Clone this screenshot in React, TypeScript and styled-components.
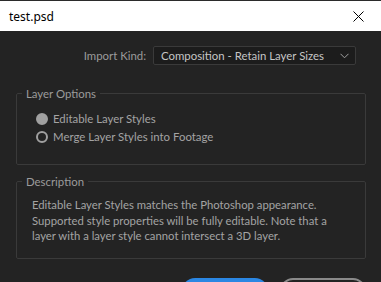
import styled, { createGlobalStyle } from 'styled-components'

const Global = createGlobalStyle`
  html, body {
    margin: 0;
    padding: 0;
    background: #232323;
  }
  body {
    font-family: Lato, "Noto Sans", sans-serif;
    overflow: hidden;
  }
`

const Window = styled.div`
  width: 381px;
  height: 282px;
  display: flex;
  flex-direction: column;
  background: #232323;
  overflow: hidden;
`

const TitleBar = styled.div`
  height: 31px;
  flex: none;
  background: #ffffff;
  border-top: 1px solid #2b2b2b;
  box-sizing: border-box;
  display: flex;
  align-items: center;
  justify-content: space-between;
  padding: 0 0 0 9px;
`

const Title = styled.span`
  font-family: "Noto Sans", sans-serif;
  font-size: 12px;
  color: #000;
`

const CloseBtn = styled.div`
  width: 46px;
  height: 30px;
  display: flex;
  align-items: center;
  justify-content: center;
`

const Body = styled.div`
  flex: 1;
  display: flex;
  flex-direction: column;
  padding: 15px 15px 0 16px;
`

const KindRow = styled.div`
  display: flex;
  align-items: center;
  justify-content: flex-end;
  gap: 7px;
  padding-right: 10px;
`

const Label = styled.span`
  font-size: 11.4px;
  color: #9b9b9b;
`

const Select = styled.div`
  width: 203px;
  height: 19px;
  box-sizing: border-box;
  border: 1px solid #3a3a3a;
  border-radius: 2px;
  background: #1c1c1c;
  display: flex;
  align-items: center;
  justify-content: space-between;
  padding: 0 6px 0 7px;
  font-size: 11.4px;
  color: #c6c6c6;
`

const Group = styled.fieldset<{ $h: number; $mt: number }>`
  margin: ${p => p.$mt}px 0 0 0;
  height: ${p => p.$h}px;
  box-sizing: border-box;
  border: 1px solid #3a3a3a;
  border-radius: 2px;
  padding: 0;
  min-width: 0;
`

const Legend = styled.legend`
  font-size: 11.4px;
  color: #9b9b9b;
  padding: 0 4px;
  margin-left: 5px;
`

const Options = styled.div`
  display: flex;
  flex-direction: column;
  gap: 3px;
  padding: 11px 0 0 19px;
`

const Option = styled.label`
  display: flex;
  align-items: center;
  gap: 5px;
  font-size: 11.4px;
  color: #a3a3a3;
  height: 15px;
`

const Dot = styled.span<{ $on?: boolean }>`
  width: 12px;
  height: 12px;
  border-radius: 50%;
  box-sizing: border-box;
  border: 2px solid #a0a0a0;
  background: ${p => (p.$on ? '#a0a0a0' : 'transparent')};
  flex: none;
`

const Desc = styled.div`
  display: flex;
  flex-direction: column;
  padding: 9px 0 0 15px;
  font-size: 11.3px;
  line-height: 15.5px;
  color: #a3a3a3;
  white-space: nowrap;
`

const Buttons = styled.div`
  display: flex;
  justify-content: flex-end;
  gap: 12px;
  margin-top: 19px;
`

const Button = styled.div<{ $primary?: boolean }>`
  width: 86px;
  height: 26px;
  box-sizing: border-box;
  border-radius: 13px;
  background: ${p => (p.$primary ? '#2b87e3' : 'transparent')};
  border: ${p => (p.$primary ? 'none' : '2px solid #8a8a8a')};
`

export default function App() {
  return (
    <Window>
      <Global />
      <TitleBar>
        <Title>test.psd</Title>
        <CloseBtn>
          <svg width="11" height="11" viewBox="0 0 11 11">
            <path d="M0.5 0.5 L10.5 10.5 M10.5 0.5 L0.5 10.5" stroke="#000" strokeWidth="1" />
          </svg>
        </CloseBtn>
      </TitleBar>
      <Body>
        <KindRow>
          <Label>Import Kind:</Label>
          <Select>
            <span>Composition - Retain Layer Sizes</span>
            <svg width="9" height="6" viewBox="0 0 9 6">
              <path d="M0.5 0.8 L4.5 4.8 L8.5 0.8" stroke="#a0a0a0" strokeWidth="1" fill="none" />
            </svg>
          </Select>
        </KindRow>
        <Group $h={78} $mt={22}>
          <Legend>Layer Options</Legend>
          <Options>
            <Option>
              <Dot $on />
              Editable Layer Styles
            </Option>
            <Option>
              <Dot />
              Merge Layer Styles into Footage
            </Option>
          </Options>
        </Group>
        <Group $h={84} $mt={10}>
          <Legend>Description</Legend>
          <Desc>
            <span>Editable Layer Styles matches the Photoshop appearance.</span>
            <span>Supported style properties will be fully editable. Note that a</span>
            <span>layer with a layer style cannot intersect a 3D layer.</span>
          </Desc>
        </Group>
        <Buttons>
          <Button $primary />
          <Button />
        </Buttons>
      </Body>
    </Window>
  )
}
